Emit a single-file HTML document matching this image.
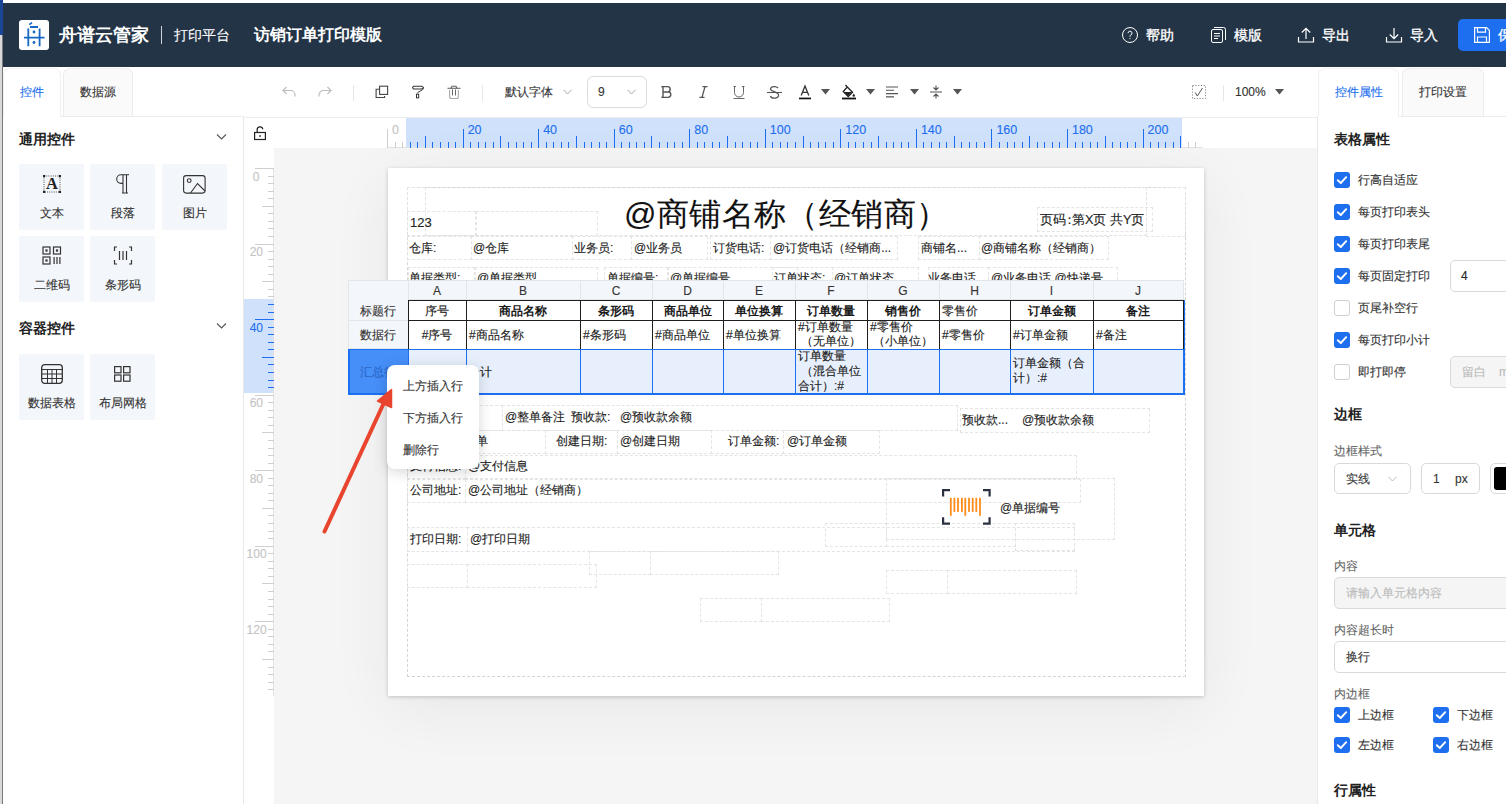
<!DOCTYPE html>
<html><head><meta charset="utf-8">
<style>
*{box-sizing:border-box;margin:0;padding:0}
html,body{width:1506px;height:804px;overflow:hidden;background:#fff;font-family:"Liberation Sans",sans-serif;color:#333;-webkit-text-stroke-width:0.12px}
.a{position:absolute}
.sec,[style*="font-weight:bold"]{-webkit-text-stroke-width:0 !important}
.t{position:absolute;white-space:nowrap;font-size:12px;line-height:14px}
.db{position:absolute;border:1px dashed #dcdcdc}
svg{position:absolute;overflow:visible}
/* header */
#hdr{position:absolute;left:3px;top:3px;width:1503px;height:64px;background:#233446}
.hi{position:absolute;color:#fff;font-size:14px;line-height:16px;white-space:nowrap;-webkit-text-stroke:0.35px #fff}
/* panels */
.tab{position:absolute;top:68px;height:49px;border:1px solid #ececec;border-bottom:none;border-radius:7px 7px 0 0;font-size:12px;line-height:47px;text-align:center;color:#333}
.card{position:absolute;width:65px;height:66px;background:#f3f6fa;border-radius:2px}
.card .lb{position:absolute;left:0;width:100%;top:42px;text-align:center;font-size:12px;line-height:14px;color:#333}
.sec{position:absolute;font-size:14px;font-weight:bold;line-height:16px;color:#222;white-space:nowrap}
/* ruler */
.rl{position:absolute;font-size:12px;color:#1e6ff0;line-height:12px}
/* table */
.th{position:absolute;font-size:12px;line-height:14px;text-align:center;color:#333}
.cb{position:absolute;width:16px;height:16px;border-radius:3px}
.cb.on{background:#1e6ff0}
.cb.off{border:1px solid #d0d0d0;background:#fff}
.rp{position:absolute;font-size:12px;line-height:14px;color:#333;white-space:nowrap}
.lbl{position:absolute;font-size:12px;line-height:14px;color:#666;white-space:nowrap}
.inp{position:absolute;border:1px solid #d9d9d9;border-radius:4px;background:#fff}
</style></head>
<body>
<!-- outer strips -->
<div class="a" style="left:0;top:0;width:1506px;height:3px;background:#fff"></div>
<div class="a" style="left:0;top:35px;width:2px;height:769px;background:#d9d9d9"></div>
<div class="a" style="left:2px;top:35px;width:1px;height:769px;background:#7a7a7a"></div>
<div class="a" style="left:0;top:0;width:3px;height:35px;background:#1b4596"></div>
<!-- HEADER -->
<div id="hdr"></div>
<div class="a" style="left:19px;top:20px;width:30px;height:30px;background:#fff;border-radius:3px"></div>
<svg style="left:19px;top:20px" width="30" height="30" viewBox="0 0 30 30">
 <g stroke="#1768c2" stroke-width="1.8" fill="none">
  <path d="M9.3 8.5 V26.2 M20.6 8.5 V26.2 M11 7 H19 M5 17.6 H25.5 M10.3 4.6 L13 2.6"/>
 </g>
 <circle cx="15" cy="12" r="1.4" fill="#1768c2"/><circle cx="15" cy="22.5" r="1.4" fill="#1768c2"/>
</svg>
<div class="hi" style="left:59px;top:25px;font-size:18px;line-height:20px;font-weight:bold;-webkit-text-stroke:0">舟谱云管家</div>
<div class="a" style="left:161px;top:26px;width:1px;height:18px;background:#d0d4da"></div>
<div class="hi" style="left:174px;top:27px;-webkit-text-stroke:0.1px #fff">打印平台</div>
<div class="hi" style="left:254px;top:26px;font-size:16px;line-height:18px;font-weight:bold;-webkit-text-stroke:0">访销订单打印模版</div>

<!-- header right -->
<svg style="left:1122px;top:27px" width="16" height="16" viewBox="0 0 16 16"><circle cx="8" cy="8" r="7.5" stroke="#fff" fill="none" stroke-width="1"/><path d="M6 6.2a2 2 0 1 1 2.6 1.9c-.4.2-.6.5-.6.9v.8" stroke="#fff" fill="none" stroke-width="1"/><circle cx="8" cy="11.6" r=".6" fill="#fff"/></svg>
<div class="hi" style="left:1146px;top:27px">帮助</div>
<svg style="left:1211px;top:27px" width="15" height="16" viewBox="0 0 15 16"><rect x="0.5" y="2.5" width="11" height="13" rx="1.5" stroke="#fff" fill="none"/><path d="M3 .5h9.5a2 2 0 0 1 2 2V13" stroke="#fff" fill="none"/><path d="M3 6.5h6M3 9h6M3 11.5h4" stroke="#fff"/></svg>
<div class="hi" style="left:1234px;top:27px">模版</div>
<svg style="left:1298px;top:27px" width="16" height="16" viewBox="0 0 16 16"><path d="M.5 10v5h15v-5M8 12V1.5M3.8 5.5 8 1.3l4.2 4.2" stroke="#fff" fill="none" stroke-width="1.2"/></svg>
<div class="hi" style="left:1322px;top:27px">导出</div>
<svg style="left:1386px;top:27px" width="16" height="16" viewBox="0 0 16 16"><path d="M.5 10v5h15v-5M8 1v10.5M3.8 7.5 8 11.7l4.2-4.2" stroke="#fff" fill="none" stroke-width="1.2"/></svg>
<div class="hi" style="left:1410px;top:27px">导入</div>
<div class="a" style="left:1458px;top:19px;width:60px;height:32px;background:#1e6ff0;border-radius:5px"></div>
<svg style="left:1474px;top:27px" width="16" height="16" viewBox="0 0 16 16"><path d="M.6.6h12l2.8 2.8v12H.6z M3.5.6v4.5h8V.6 M3.5 15.4V10h9v5.4" stroke="#fff" fill="none" stroke-width="1.2"/></svg>
<div class="hi" style="left:1498px;top:27px">保存</div>

<!-- LEFT PANEL -->
<div class="a" style="left:3px;top:67px;width:240px;height:737px;background:#fff"></div>
<div class="tab" style="left:3px;width:58px;color:#1e6ff0;background:#fff;border-color:#f1f1f1">控件</div>
<div class="tab" style="left:63px;width:70px;background:#fafafa">数据源</div>
<div class="a" style="left:60px;top:116px;width:184px;height:1px;background:#ececec"></div>
<div class="a" style="left:243px;top:117px;width:1px;height:687px;background:#ececec"></div>

<div class="sec" style="left:19px;top:131px">通用控件</div>
<svg style="left:216px;top:133px" width="11" height="8" viewBox="0 0 11 8"><path d="M1 1.5l4.5 4.5L10 1.5" stroke="#555" fill="none" stroke-width="1.1"/></svg>
<div class="card" style="left:19px;top:164px"><div class="lb">文本</div></div>
<div class="card" style="left:90px;top:164px"><div class="lb">段落</div></div>
<div class="card" style="left:162px;top:164px"><div class="lb">图片</div></div>
<div class="card" style="left:19px;top:236px"><div class="lb">二维码</div></div>
<div class="card" style="left:90px;top:236px"><div class="lb">条形码</div></div>
<div class="sec" style="left:19px;top:320px">容器控件</div>
<svg style="left:216px;top:322px" width="11" height="8" viewBox="0 0 11 8"><path d="M1 1.5l4.5 4.5L10 1.5" stroke="#555" fill="none" stroke-width="1.1"/></svg>
<div class="card" style="left:19px;top:354px"><div class="lb">数据表格</div></div>
<div class="card" style="left:90px;top:354px"><div class="lb">布局网格</div></div>
<!-- icons -->
<svg style="left:43px;top:175px" width="18" height="18" viewBox="0 0 18 18">
 <rect x="1" y="1" width="16" height="16" fill="none" stroke="#555" stroke-width="1" stroke-dasharray="1 1.2"/>
 <rect x="0" y="0" width="2.2" height="2.2" fill="#222"/><rect x="15.8" y="0" width="2.2" height="2.2" fill="#222"/>
 <rect x="0" y="15.8" width="2.2" height="2.2" fill="#222"/><rect x="15.8" y="15.8" width="2.2" height="2.2" fill="#222"/>
 <text x="9" y="14.2" text-anchor="middle" font-family="Liberation Serif" font-weight="bold" font-size="16.5" fill="#222" style="-webkit-text-stroke-width:0">A</text>
</svg>
<svg style="left:115px;top:174px" width="16" height="20" viewBox="0 0 16 20">
 <path d="M14 0.8 H6 A4.3 4.3 0 0 0 6 9.4 H8" stroke="#333" fill="none" stroke-width="1.1"/>
 <path d="M8 0.8 V19 M11.5 0.8 V19 M7 19 H13" stroke="#333" fill="none" stroke-width="1.1"/>
</svg>
<svg style="left:183px;top:175px" width="23" height="19" viewBox="0 0 23 19">
 <rect x="0.6" y="0.6" width="21.5" height="17.5" rx="2.5" stroke="#333" fill="none" stroke-width="1.1"/>
 <circle cx="6.2" cy="5.6" r="1.9" stroke="#333" fill="none" stroke-width="1.1"/>
 <path d="M7.5 18 L14.5 8.5 L22 16" stroke="#333" fill="none" stroke-width="1.1"/>
</svg>
<svg style="left:42px;top:246px" width="20" height="19" viewBox="0 0 20 19">
 <g stroke="#333" fill="none" stroke-width="1.2"><rect x="1" y="1" width="7" height="7"/><rect x="11.5" y="1" width="7" height="7"/><rect x="1" y="11" width="7" height="7"/></g>
 <g fill="#333"><rect x="3.4" y="3.4" width="2.2" height="2.2"/><rect x="13.9" y="3.4" width="2.2" height="2.2"/><rect x="3.4" y="13.4" width="2.2" height="2.2"/>
 <rect x="11.5" y="11" width="1.2" height="7"/><rect x="14.4" y="11" width="1.2" height="7"/><rect x="17.3" y="11" width="1.2" height="7"/></g>
</svg>
<svg style="left:113px;top:246px" width="20" height="19" viewBox="0 0 20 19">
 <path d="M4 1 H1.5 V5 M1.5 14 V18 H4 M16 1 H18.5 V5 M18.5 14 V18 H16" stroke="#333" fill="none" stroke-width="1.2"/>
 <path d="M6.5 5 V14 M10 5 V14 M13.5 5 V14" stroke="#333" stroke-width="1.2"/>
</svg>
<svg style="left:41px;top:364px" width="22" height="20" viewBox="0 0 22 20">
 <rect x="0.7" y="0.7" width="20.6" height="18.6" rx="3" stroke="#333" fill="none" stroke-width="1.3"/>
 <path d="M0.7 5.5 H21.3 M6.5 5.5 V19.3 M11 5.5 V19.3 M15.5 5.5 V19.3 M0.7 10 H21.3 M0.7 14.5 H21.3" stroke="#333" fill="none" stroke-width="1"/>
</svg>
<svg style="left:114px;top:366px" width="17" height="16" viewBox="0 0 17 16">
 <g stroke="#333" fill="none" stroke-width="1.2"><rect x="0.6" y="0.6" width="6.4" height="6.2"/><rect x="9.6" y="0.6" width="6.4" height="6.2"/><rect x="0.6" y="9" width="6.4" height="6.2"/><rect x="9.6" y="9" width="6.4" height="6.2"/></g>
</svg>


<!-- TOOLBAR -->
<svg style="left:282px;top:86px" width="14" height="11" viewBox="0 0 14 11"><path d="M4.5 1 L1 4.5 L4.5 8 M1 4.5 H8.5 A4.5 4.5 0 0 1 13 9 V10.5" stroke="#bdbdbd" fill="none" stroke-width="1.2"/></svg>
<svg style="left:318px;top:86px" width="14" height="11" viewBox="0 0 14 11"><path d="M9.5 1 L13 4.5 L9.5 8 M13 4.5 H5.5 A4.5 4.5 0 0 0 1 9 V10.5" stroke="#bdbdbd" fill="none" stroke-width="1.2"/></svg>
<div class="a" style="left:353px;top:85px;width:1px;height:16px;background:#e6e6e6"></div>
<svg style="left:375px;top:85px" width="14" height="14" viewBox="0 0 14 14"><rect x="4.6" y="1.2" width="8" height="8.2" stroke="#444" fill="none" stroke-width="1.1"/><path d="M4.2 4.3 H1.1 V12.5 H9.6 V11" stroke="#444" fill="none" stroke-width="1.1"/></svg>
<svg style="left:412px;top:85px" width="13" height="14" viewBox="0 0 13 14"><path d="M1.5 1.2 H9.8 L11.5 2.6 L9.8 4 H1.5 L0.6 2.6 Z" stroke="#333" fill="none" stroke-width="1.1" stroke-linejoin="round"/><path d="M11.5 2.6 Q11.8 5 8 6.2 Q5.6 6.8 5.6 8.3" stroke="#444" fill="none" stroke-width="1"/><rect x="4.5" y="9.2" width="2.2" height="3.6" stroke="#333" fill="none" stroke-width="1"/></svg>
<svg style="left:447px;top:85px" width="14" height="14" viewBox="0 0 14 14"><path d="M0.5 3.3 H13.5" stroke="#666" stroke-width="1.1"/><path d="M4 3.3 L5 1.2 H9 L10 3.3" stroke="#666" fill="none" stroke-width="1.1"/><path d="M2.6 5 V11.5 A2 2 0 0 0 4.6 13.5 H9.4 A2 2 0 0 0 11.4 11.5 V5" stroke="#aaa" fill="none" stroke-width="1.1"/><path d="M5.5 4.5 V10.5 M8.5 4.5 V10.5" stroke="#666" stroke-width="1"/></svg>
<div class="a" style="left:482px;top:85px;width:1px;height:16px;background:#e6e6e6"></div>
<div class="t" style="left:505px;top:85px;color:#333">默认字体</div>
<svg style="left:563px;top:89px" width="9" height="6" viewBox="0 0 9 6"><path d="M.5 .8 4.5 5 8.5 .8" stroke="#aaa" fill="none" stroke-width="1"/></svg>
<div class="inp" style="left:587px;top:76px;width:60px;height:32px;border-radius:6px;border-color:#dcdcdc"></div>
<div class="t" style="left:598px;top:85px;color:#333">9</div>
<svg style="left:627px;top:89px" width="9" height="6" viewBox="0 0 9 6"><path d="M.5 .8 4.5 5 8.5 .8" stroke="#aaa" fill="none" stroke-width="1"/></svg>
<!-- B I U S -->
<svg style="left:661px;top:86px" width="12" height="12" viewBox="0 0 12 12"><path d="M0.3 0.6 H6.5 A2.7 2.7 0 0 1 6.5 6 H2 M2 0.6 V11.4 M0.3 11.4 H7 A2.8 2.8 0 0 0 7 5.8" stroke="#555" fill="none" stroke-width="1.4"/></svg>
<svg style="left:699px;top:86px" width="9" height="12" viewBox="0 0 9 12"><path d="M3.5 0.6 H8.5 M0.5 11.4 H5.5 M6 0.6 L3 11.4" stroke="#555" fill="none" stroke-width="1.3"/></svg>
<svg style="left:733px;top:86px" width="12" height="14" viewBox="0 0 12 14"><path d="M1.5 0 V6.5 A4.5 4.5 0 0 0 10.5 6.5 V0 M0.5 0.5 H3 M9 0.5 H11.5 M0.5 12.5 H11.5" stroke="#666" fill="none" stroke-width="1"/></svg>
<svg style="left:767px;top:86px" width="15" height="13" viewBox="0 0 15 13"><path d="M11 2 A4 2.6 0 0 0 3.5 3 C3.5 5.5 11.5 6 11.5 9 A4 2.6 0 0 1 3.5 10" stroke="#555" fill="none" stroke-width="1.3"/><path d="M0 6.5 H15" stroke="#555" stroke-width="1.1"/></svg>
<svg style="left:799px;top:85px" width="13" height="15" viewBox="0 0 13 15"><path d="M2.2 10.5 L6 1 L9.8 10.5 M3.5 7.3 H8.5" stroke="#333" fill="none" stroke-width="1.3"/><rect x="0" y="12.6" width="12" height="1.7" fill="#111"/></svg>
<svg style="left:821px;top:89px" width="9" height="6" viewBox="0 0 9 6"><path d="M0 0 H9 L4.5 5.5Z" fill="#555"/></svg>
<svg style="left:842px;top:84px" width="14" height="16" viewBox="0 0 14 16"><path d="M3.5 1 L5.3 3 M5.3 3 L10.5 8.2 L6.2 12.5 L1.2 7.5 Z" stroke="#222" fill="none" stroke-width="1.3"/><path d="M1.8 8 L10 8 L6.2 12 Z" fill="#222"/><path d="M11.8 9.5 L13 11.5 A1.2 1.2 0 0 1 10.6 11.5 Z" fill="#222"/><rect x="0" y="13.6" width="14" height="1.8" fill="#111"/></svg>
<svg style="left:866px;top:89px" width="9" height="6" viewBox="0 0 9 6"><path d="M0 0 H9 L4.5 5.5Z" fill="#555"/></svg>
<svg style="left:886px;top:86px" width="13" height="12" viewBox="0 0 13 12"><path d="M0 1 H12 M0 4.3 H8 M0 7.6 H12 M0 10.9 H8" stroke="#555" stroke-width="1.1"/></svg>
<svg style="left:910px;top:89px" width="9" height="6" viewBox="0 0 9 6"><path d="M0 0 H9 L4.5 5.5Z" fill="#555"/></svg>
<svg style="left:930px;top:85px" width="12" height="14" viewBox="0 0 12 14"><path d="M0 7 H12 M6 0.5 V5 M6 9 V13.5 M3.5 2.5 L6 5 L8.5 2.5 M3.5 11.5 L6 9 L8.5 11.5" stroke="#555" fill="none" stroke-width="1.1"/></svg>
<svg style="left:953px;top:89px" width="9" height="6" viewBox="0 0 9 6"><path d="M0 0 H9 L4.5 5.5Z" fill="#555"/></svg>
<svg style="left:1192px;top:85px" width="14" height="14" viewBox="0 0 14 14"><rect x="0.5" y="0.5" width="13" height="13" stroke="#888" fill="none" stroke-width="1" stroke-dasharray="1.2 1.6"/><path d="M3.2 7.5 L5.3 11 L10.5 3" stroke="#555" fill="none" stroke-width="1"/></svg>
<div class="a" style="left:1223px;top:85px;width:1px;height:16px;background:#e6e6e6"></div>
<div class="t" style="left:1235px;top:85px;color:#333">100%</div>
<svg style="left:1275px;top:89px" width="9" height="6" viewBox="0 0 9 6"><path d="M0 0 H9 L4.5 5.5Z" fill="#555"/></svg>
<div class="a" style="left:244px;top:117px;width:1074px;height:1px;background:#ececec"></div>


<!-- RULERS / CANVAS -->
<!--CANVAS--><div class="a" style="left:244px;top:118px;width:1074px;height:30px;background:#fff"></div>
<div class="a" style="left:244px;top:148px;width:30px;height:656px;background:#fff"></div>
<div class="a" style="left:274px;top:148px;width:1044px;height:656px;background:#f5f5f5"></div>
<div class="a" style="left:243px;top:117px;width:1px;height:687px;background:#e8e8e8"></div>
<div class="a" style="left:1317px;top:117px;width:1px;height:687px;background:#e8e8e8"></div>
<svg style="left:254px;top:126px" width="12" height="14" viewBox="0 0 12 14"><path d="M3.2 6.5 V4 A2.8 2.8 0 0 1 8.8 3.3" stroke="#222" fill="none" stroke-width="1.2"/><rect x="0.6" y="6.5" width="10.8" height="7" stroke="#222" fill="none" stroke-width="1.2"/><rect x="5.4" y="9" width="1.2" height="2" fill="#222"/></svg>
<div class="a" style="left:406px;top:118px;width:776px;height:30px;background:#d0e2fb"></div>
<div class="a" style="left:388px;top:147px;width:815px;height:1px;background:#e3e3e3"></div>
<div class="a" style="left:387.10px;top:129px;width:1px;height:19px;background:#cfcfcf"></div>
<div class="rl" style="left:392.10px;top:124px;font-size:12.5px;color:#c4c4c4">0</div>
<div class="a" style="left:394.65px;top:142px;width:1px;height:6px;background:#cfcfcf"></div>
<div class="a" style="left:402.21px;top:142px;width:1px;height:6px;background:#cfcfcf"></div>
<div class="a" style="left:409.76px;top:142px;width:1px;height:6px;background:#1e6ff0"></div>
<div class="a" style="left:417.32px;top:142px;width:1px;height:6px;background:#1e6ff0"></div>
<div class="a" style="left:424.87px;top:136px;width:1px;height:12px;background:#1e6ff0"></div>
<div class="a" style="left:432.42px;top:142px;width:1px;height:6px;background:#1e6ff0"></div>
<div class="a" style="left:439.98px;top:142px;width:1px;height:6px;background:#1e6ff0"></div>
<div class="a" style="left:447.53px;top:142px;width:1px;height:6px;background:#1e6ff0"></div>
<div class="a" style="left:455.09px;top:142px;width:1px;height:6px;background:#1e6ff0"></div>
<div class="a" style="left:462.64px;top:129px;width:1px;height:19px;background:#1e6ff0"></div>
<div class="rl" style="left:467.64px;top:124px;font-size:12.5px;color:#1e6ff0">20</div>
<div class="a" style="left:470.19px;top:142px;width:1px;height:6px;background:#1e6ff0"></div>
<div class="a" style="left:477.75px;top:142px;width:1px;height:6px;background:#1e6ff0"></div>
<div class="a" style="left:485.30px;top:142px;width:1px;height:6px;background:#1e6ff0"></div>
<div class="a" style="left:492.86px;top:142px;width:1px;height:6px;background:#1e6ff0"></div>
<div class="a" style="left:500.41px;top:136px;width:1px;height:12px;background:#1e6ff0"></div>
<div class="a" style="left:507.96px;top:142px;width:1px;height:6px;background:#1e6ff0"></div>
<div class="a" style="left:515.52px;top:142px;width:1px;height:6px;background:#1e6ff0"></div>
<div class="a" style="left:523.07px;top:142px;width:1px;height:6px;background:#1e6ff0"></div>
<div class="a" style="left:530.63px;top:142px;width:1px;height:6px;background:#1e6ff0"></div>
<div class="a" style="left:538.18px;top:129px;width:1px;height:19px;background:#1e6ff0"></div>
<div class="rl" style="left:543.18px;top:124px;font-size:12.5px;color:#1e6ff0">40</div>
<div class="a" style="left:545.73px;top:142px;width:1px;height:6px;background:#1e6ff0"></div>
<div class="a" style="left:553.29px;top:142px;width:1px;height:6px;background:#1e6ff0"></div>
<div class="a" style="left:560.84px;top:142px;width:1px;height:6px;background:#1e6ff0"></div>
<div class="a" style="left:568.40px;top:142px;width:1px;height:6px;background:#1e6ff0"></div>
<div class="a" style="left:575.95px;top:136px;width:1px;height:12px;background:#1e6ff0"></div>
<div class="a" style="left:583.50px;top:142px;width:1px;height:6px;background:#1e6ff0"></div>
<div class="a" style="left:591.06px;top:142px;width:1px;height:6px;background:#1e6ff0"></div>
<div class="a" style="left:598.61px;top:142px;width:1px;height:6px;background:#1e6ff0"></div>
<div class="a" style="left:606.17px;top:142px;width:1px;height:6px;background:#1e6ff0"></div>
<div class="a" style="left:613.72px;top:129px;width:1px;height:19px;background:#1e6ff0"></div>
<div class="rl" style="left:618.72px;top:124px;font-size:12.5px;color:#1e6ff0">60</div>
<div class="a" style="left:621.27px;top:142px;width:1px;height:6px;background:#1e6ff0"></div>
<div class="a" style="left:628.83px;top:142px;width:1px;height:6px;background:#1e6ff0"></div>
<div class="a" style="left:636.38px;top:142px;width:1px;height:6px;background:#1e6ff0"></div>
<div class="a" style="left:643.94px;top:142px;width:1px;height:6px;background:#1e6ff0"></div>
<div class="a" style="left:651.49px;top:136px;width:1px;height:12px;background:#1e6ff0"></div>
<div class="a" style="left:659.04px;top:142px;width:1px;height:6px;background:#1e6ff0"></div>
<div class="a" style="left:666.60px;top:142px;width:1px;height:6px;background:#1e6ff0"></div>
<div class="a" style="left:674.15px;top:142px;width:1px;height:6px;background:#1e6ff0"></div>
<div class="a" style="left:681.71px;top:142px;width:1px;height:6px;background:#1e6ff0"></div>
<div class="a" style="left:689.26px;top:129px;width:1px;height:19px;background:#1e6ff0"></div>
<div class="rl" style="left:694.26px;top:124px;font-size:12.5px;color:#1e6ff0">80</div>
<div class="a" style="left:696.81px;top:142px;width:1px;height:6px;background:#1e6ff0"></div>
<div class="a" style="left:704.37px;top:142px;width:1px;height:6px;background:#1e6ff0"></div>
<div class="a" style="left:711.92px;top:142px;width:1px;height:6px;background:#1e6ff0"></div>
<div class="a" style="left:719.48px;top:142px;width:1px;height:6px;background:#1e6ff0"></div>
<div class="a" style="left:727.03px;top:136px;width:1px;height:12px;background:#1e6ff0"></div>
<div class="a" style="left:734.58px;top:142px;width:1px;height:6px;background:#1e6ff0"></div>
<div class="a" style="left:742.14px;top:142px;width:1px;height:6px;background:#1e6ff0"></div>
<div class="a" style="left:749.69px;top:142px;width:1px;height:6px;background:#1e6ff0"></div>
<div class="a" style="left:757.25px;top:142px;width:1px;height:6px;background:#1e6ff0"></div>
<div class="a" style="left:764.80px;top:129px;width:1px;height:19px;background:#1e6ff0"></div>
<div class="rl" style="left:769.80px;top:124px;font-size:12.5px;color:#1e6ff0">100</div>
<div class="a" style="left:772.35px;top:142px;width:1px;height:6px;background:#1e6ff0"></div>
<div class="a" style="left:779.91px;top:142px;width:1px;height:6px;background:#1e6ff0"></div>
<div class="a" style="left:787.46px;top:142px;width:1px;height:6px;background:#1e6ff0"></div>
<div class="a" style="left:795.02px;top:142px;width:1px;height:6px;background:#1e6ff0"></div>
<div class="a" style="left:802.57px;top:136px;width:1px;height:12px;background:#1e6ff0"></div>
<div class="a" style="left:810.12px;top:142px;width:1px;height:6px;background:#1e6ff0"></div>
<div class="a" style="left:817.68px;top:142px;width:1px;height:6px;background:#1e6ff0"></div>
<div class="a" style="left:825.23px;top:142px;width:1px;height:6px;background:#1e6ff0"></div>
<div class="a" style="left:832.79px;top:142px;width:1px;height:6px;background:#1e6ff0"></div>
<div class="a" style="left:840.34px;top:129px;width:1px;height:19px;background:#1e6ff0"></div>
<div class="rl" style="left:845.34px;top:124px;font-size:12.5px;color:#1e6ff0">120</div>
<div class="a" style="left:847.89px;top:142px;width:1px;height:6px;background:#1e6ff0"></div>
<div class="a" style="left:855.45px;top:142px;width:1px;height:6px;background:#1e6ff0"></div>
<div class="a" style="left:863.00px;top:142px;width:1px;height:6px;background:#1e6ff0"></div>
<div class="a" style="left:870.56px;top:142px;width:1px;height:6px;background:#1e6ff0"></div>
<div class="a" style="left:878.11px;top:136px;width:1px;height:12px;background:#1e6ff0"></div>
<div class="a" style="left:885.66px;top:142px;width:1px;height:6px;background:#1e6ff0"></div>
<div class="a" style="left:893.22px;top:142px;width:1px;height:6px;background:#1e6ff0"></div>
<div class="a" style="left:900.77px;top:142px;width:1px;height:6px;background:#1e6ff0"></div>
<div class="a" style="left:908.33px;top:142px;width:1px;height:6px;background:#1e6ff0"></div>
<div class="a" style="left:915.88px;top:129px;width:1px;height:19px;background:#1e6ff0"></div>
<div class="rl" style="left:920.88px;top:124px;font-size:12.5px;color:#1e6ff0">140</div>
<div class="a" style="left:923.43px;top:142px;width:1px;height:6px;background:#1e6ff0"></div>
<div class="a" style="left:930.99px;top:142px;width:1px;height:6px;background:#1e6ff0"></div>
<div class="a" style="left:938.54px;top:142px;width:1px;height:6px;background:#1e6ff0"></div>
<div class="a" style="left:946.10px;top:142px;width:1px;height:6px;background:#1e6ff0"></div>
<div class="a" style="left:953.65px;top:136px;width:1px;height:12px;background:#1e6ff0"></div>
<div class="a" style="left:961.20px;top:142px;width:1px;height:6px;background:#1e6ff0"></div>
<div class="a" style="left:968.76px;top:142px;width:1px;height:6px;background:#1e6ff0"></div>
<div class="a" style="left:976.31px;top:142px;width:1px;height:6px;background:#1e6ff0"></div>
<div class="a" style="left:983.87px;top:142px;width:1px;height:6px;background:#1e6ff0"></div>
<div class="a" style="left:991.42px;top:129px;width:1px;height:19px;background:#1e6ff0"></div>
<div class="rl" style="left:996.42px;top:124px;font-size:12.5px;color:#1e6ff0">160</div>
<div class="a" style="left:998.97px;top:142px;width:1px;height:6px;background:#1e6ff0"></div>
<div class="a" style="left:1006.53px;top:142px;width:1px;height:6px;background:#1e6ff0"></div>
<div class="a" style="left:1014.08px;top:142px;width:1px;height:6px;background:#1e6ff0"></div>
<div class="a" style="left:1021.64px;top:142px;width:1px;height:6px;background:#1e6ff0"></div>
<div class="a" style="left:1029.19px;top:136px;width:1px;height:12px;background:#1e6ff0"></div>
<div class="a" style="left:1036.74px;top:142px;width:1px;height:6px;background:#1e6ff0"></div>
<div class="a" style="left:1044.30px;top:142px;width:1px;height:6px;background:#1e6ff0"></div>
<div class="a" style="left:1051.85px;top:142px;width:1px;height:6px;background:#1e6ff0"></div>
<div class="a" style="left:1059.41px;top:142px;width:1px;height:6px;background:#1e6ff0"></div>
<div class="a" style="left:1066.96px;top:129px;width:1px;height:19px;background:#1e6ff0"></div>
<div class="rl" style="left:1071.96px;top:124px;font-size:12.5px;color:#1e6ff0">180</div>
<div class="a" style="left:1074.51px;top:142px;width:1px;height:6px;background:#1e6ff0"></div>
<div class="a" style="left:1082.07px;top:142px;width:1px;height:6px;background:#1e6ff0"></div>
<div class="a" style="left:1089.62px;top:142px;width:1px;height:6px;background:#1e6ff0"></div>
<div class="a" style="left:1097.18px;top:142px;width:1px;height:6px;background:#1e6ff0"></div>
<div class="a" style="left:1104.73px;top:136px;width:1px;height:12px;background:#1e6ff0"></div>
<div class="a" style="left:1112.28px;top:142px;width:1px;height:6px;background:#1e6ff0"></div>
<div class="a" style="left:1119.84px;top:142px;width:1px;height:6px;background:#1e6ff0"></div>
<div class="a" style="left:1127.39px;top:142px;width:1px;height:6px;background:#1e6ff0"></div>
<div class="a" style="left:1134.95px;top:142px;width:1px;height:6px;background:#1e6ff0"></div>
<div class="a" style="left:1142.50px;top:129px;width:1px;height:19px;background:#1e6ff0"></div>
<div class="rl" style="left:1147.50px;top:124px;font-size:12.5px;color:#1e6ff0">200</div>
<div class="a" style="left:1150.05px;top:142px;width:1px;height:6px;background:#1e6ff0"></div>
<div class="a" style="left:1157.61px;top:142px;width:1px;height:6px;background:#1e6ff0"></div>
<div class="a" style="left:1165.16px;top:142px;width:1px;height:6px;background:#1e6ff0"></div>
<div class="a" style="left:1172.72px;top:142px;width:1px;height:6px;background:#1e6ff0"></div>
<div class="a" style="left:1180.27px;top:136px;width:1px;height:12px;background:#1e6ff0"></div>
<div class="a" style="left:1187.82px;top:142px;width:1px;height:6px;background:#cfcfcf"></div>
<div class="a" style="left:1195.38px;top:142px;width:1px;height:6px;background:#cfcfcf"></div>
<div class="a" style="left:244px;top:299px;width:30px;height:94px;background:#d0e2fb"></div>
<div class="a" style="left:273px;top:168px;width:1px;height:528px;background:#e3e3e3"></div>
<div class="a" style="left:255px;top:168.00px;width:19px;height:1px;background:#cfcfcf"></div>
<div class="rl" style="left:252.8px;top:170.5px;color:#c4c4c4">0</div>
<div class="a" style="left:268px;top:175.55px;width:6px;height:1px;background:#cfcfcf"></div>
<div class="a" style="left:268px;top:183.11px;width:6px;height:1px;background:#cfcfcf"></div>
<div class="a" style="left:268px;top:190.66px;width:6px;height:1px;background:#cfcfcf"></div>
<div class="a" style="left:268px;top:198.22px;width:6px;height:1px;background:#cfcfcf"></div>
<div class="a" style="left:262px;top:205.77px;width:12px;height:1px;background:#cfcfcf"></div>
<div class="a" style="left:268px;top:213.32px;width:6px;height:1px;background:#cfcfcf"></div>
<div class="a" style="left:268px;top:220.88px;width:6px;height:1px;background:#cfcfcf"></div>
<div class="a" style="left:268px;top:228.43px;width:6px;height:1px;background:#cfcfcf"></div>
<div class="a" style="left:268px;top:235.99px;width:6px;height:1px;background:#cfcfcf"></div>
<div class="a" style="left:255px;top:243.54px;width:19px;height:1px;background:#cfcfcf"></div>
<div class="rl" style="left:249.7px;top:246.0px;color:#c4c4c4">20</div>
<div class="a" style="left:268px;top:251.09px;width:6px;height:1px;background:#cfcfcf"></div>
<div class="a" style="left:268px;top:258.65px;width:6px;height:1px;background:#cfcfcf"></div>
<div class="a" style="left:268px;top:266.20px;width:6px;height:1px;background:#cfcfcf"></div>
<div class="a" style="left:268px;top:273.76px;width:6px;height:1px;background:#cfcfcf"></div>
<div class="a" style="left:262px;top:281.31px;width:12px;height:1px;background:#cfcfcf"></div>
<div class="a" style="left:268px;top:288.86px;width:6px;height:1px;background:#cfcfcf"></div>
<div class="a" style="left:268px;top:296.42px;width:6px;height:1px;background:#cfcfcf"></div>
<div class="a" style="left:268px;top:303.97px;width:6px;height:1px;background:#1e6ff0"></div>
<div class="a" style="left:268px;top:311.53px;width:6px;height:1px;background:#1e6ff0"></div>
<div class="a" style="left:255px;top:319.08px;width:19px;height:1px;background:#1e6ff0"></div>
<div class="rl" style="left:249.7px;top:321.6px;color:#1e6ff0">40</div>
<div class="a" style="left:268px;top:326.63px;width:6px;height:1px;background:#1e6ff0"></div>
<div class="a" style="left:268px;top:334.19px;width:6px;height:1px;background:#1e6ff0"></div>
<div class="a" style="left:268px;top:341.74px;width:6px;height:1px;background:#1e6ff0"></div>
<div class="a" style="left:268px;top:349.30px;width:6px;height:1px;background:#1e6ff0"></div>
<div class="a" style="left:262px;top:356.85px;width:12px;height:1px;background:#1e6ff0"></div>
<div class="a" style="left:268px;top:364.40px;width:6px;height:1px;background:#1e6ff0"></div>
<div class="a" style="left:268px;top:371.96px;width:6px;height:1px;background:#1e6ff0"></div>
<div class="a" style="left:268px;top:379.51px;width:6px;height:1px;background:#1e6ff0"></div>
<div class="a" style="left:268px;top:387.07px;width:6px;height:1px;background:#1e6ff0"></div>
<div class="a" style="left:255px;top:394.62px;width:19px;height:1px;background:#cfcfcf"></div>
<div class="rl" style="left:249.7px;top:397.1px;color:#c4c4c4">60</div>
<div class="a" style="left:268px;top:402.17px;width:6px;height:1px;background:#cfcfcf"></div>
<div class="a" style="left:268px;top:409.73px;width:6px;height:1px;background:#cfcfcf"></div>
<div class="a" style="left:268px;top:417.28px;width:6px;height:1px;background:#cfcfcf"></div>
<div class="a" style="left:268px;top:424.84px;width:6px;height:1px;background:#cfcfcf"></div>
<div class="a" style="left:262px;top:432.39px;width:12px;height:1px;background:#cfcfcf"></div>
<div class="a" style="left:268px;top:439.94px;width:6px;height:1px;background:#cfcfcf"></div>
<div class="a" style="left:268px;top:447.50px;width:6px;height:1px;background:#cfcfcf"></div>
<div class="a" style="left:268px;top:455.05px;width:6px;height:1px;background:#cfcfcf"></div>
<div class="a" style="left:268px;top:462.61px;width:6px;height:1px;background:#cfcfcf"></div>
<div class="a" style="left:255px;top:470.16px;width:19px;height:1px;background:#cfcfcf"></div>
<div class="rl" style="left:249.7px;top:472.7px;color:#c4c4c4">80</div>
<div class="a" style="left:268px;top:477.71px;width:6px;height:1px;background:#cfcfcf"></div>
<div class="a" style="left:268px;top:485.27px;width:6px;height:1px;background:#cfcfcf"></div>
<div class="a" style="left:268px;top:492.82px;width:6px;height:1px;background:#cfcfcf"></div>
<div class="a" style="left:268px;top:500.38px;width:6px;height:1px;background:#cfcfcf"></div>
<div class="a" style="left:262px;top:507.93px;width:12px;height:1px;background:#cfcfcf"></div>
<div class="a" style="left:268px;top:515.48px;width:6px;height:1px;background:#cfcfcf"></div>
<div class="a" style="left:268px;top:523.04px;width:6px;height:1px;background:#cfcfcf"></div>
<div class="a" style="left:268px;top:530.59px;width:6px;height:1px;background:#cfcfcf"></div>
<div class="a" style="left:268px;top:538.15px;width:6px;height:1px;background:#cfcfcf"></div>
<div class="a" style="left:255px;top:545.70px;width:19px;height:1px;background:#cfcfcf"></div>
<div class="rl" style="left:246.6px;top:548.2px;color:#c4c4c4">100</div>
<div class="a" style="left:268px;top:553.25px;width:6px;height:1px;background:#cfcfcf"></div>
<div class="a" style="left:268px;top:560.81px;width:6px;height:1px;background:#cfcfcf"></div>
<div class="a" style="left:268px;top:568.36px;width:6px;height:1px;background:#cfcfcf"></div>
<div class="a" style="left:268px;top:575.92px;width:6px;height:1px;background:#cfcfcf"></div>
<div class="a" style="left:262px;top:583.47px;width:12px;height:1px;background:#cfcfcf"></div>
<div class="a" style="left:268px;top:591.02px;width:6px;height:1px;background:#cfcfcf"></div>
<div class="a" style="left:268px;top:598.58px;width:6px;height:1px;background:#cfcfcf"></div>
<div class="a" style="left:268px;top:606.13px;width:6px;height:1px;background:#cfcfcf"></div>
<div class="a" style="left:268px;top:613.69px;width:6px;height:1px;background:#cfcfcf"></div>
<div class="a" style="left:255px;top:621.24px;width:19px;height:1px;background:#cfcfcf"></div>
<div class="rl" style="left:246.6px;top:623.7px;color:#c4c4c4">120</div>
<div class="a" style="left:268px;top:628.79px;width:6px;height:1px;background:#cfcfcf"></div>
<div class="a" style="left:268px;top:636.35px;width:6px;height:1px;background:#cfcfcf"></div>
<div class="a" style="left:268px;top:643.90px;width:6px;height:1px;background:#cfcfcf"></div>
<div class="a" style="left:268px;top:651.46px;width:6px;height:1px;background:#cfcfcf"></div>
<div class="a" style="left:262px;top:659.01px;width:12px;height:1px;background:#cfcfcf"></div>
<div class="a" style="left:268px;top:666.56px;width:6px;height:1px;background:#cfcfcf"></div>
<div class="a" style="left:268px;top:674.12px;width:6px;height:1px;background:#cfcfcf"></div>
<div class="a" style="left:268px;top:681.67px;width:6px;height:1px;background:#cfcfcf"></div>
<div class="a" style="left:268px;top:689.23px;width:6px;height:1px;background:#cfcfcf"></div>
<div class="a" style="left:388px;top:168px;width:816px;height:528px;background:#fff;box-shadow:0 1px 4px rgba(0,0,0,.2),0 12px 60px rgba(0,0,0,.06)"></div><!--/CANVAS-->

<!--PAPER--><div class="db" style="left:407px;top:187px;width:779px;height:490px;border-color:#d4d4d4"></div>
<div class="db" style="left:407px;top:187px;width:19px;height:49px;border-color:#e4e4e4"></div>
<div class="db" style="left:425px;top:187px;width:722px;height:49px;border-color:#e4e4e4"></div>
<div class="db" style="left:1146px;top:187px;width:40px;height:50px;border-color:#e4e4e4"></div>
<div class="db" style="left:407px;top:211px;width:69px;height:25px;border-color:#e4e4e4"></div>
<div class="db" style="left:476px;top:211px;width:122px;height:25px;border-color:#e4e4e4"></div>
<div class="db" style="left:1037px;top:207px;width:116px;height:25px;border-color:#e4e4e4"></div>
<div class="db" style="left:407px;top:236px;width:65px;height:24px;border-color:#e4e4e4"></div>
<div class="db" style="left:471px;top:236px;width:102px;height:24px;border-color:#e4e4e4"></div>
<div class="db" style="left:572px;top:236px;width:60px;height:24px;border-color:#e4e4e4"></div>
<div class="db" style="left:631px;top:236px;width:77px;height:24px;border-color:#e4e4e4"></div>
<div class="db" style="left:710px;top:236px;width:61px;height:24px;border-color:#e4e4e4"></div>
<div class="db" style="left:770px;top:236px;width:128px;height:24px;border-color:#e4e4e4"></div>
<div class="db" style="left:918px;top:236px;width:62px;height:24px;border-color:#e4e4e4"></div>
<div class="db" style="left:979px;top:236px;width:130px;height:24px;border-color:#e4e4e4"></div>
<div class="db" style="left:408px;top:267px;width:67px;height:34px;border-color:#e4e4e4"></div>
<div class="db" style="left:475px;top:267px;width:123px;height:34px;border-color:#e4e4e4"></div>
<div class="db" style="left:604px;top:267px;width:64px;height:34px;border-color:#e4e4e4"></div>
<div class="db" style="left:668px;top:267px;width:130px;height:34px;border-color:#e4e4e4"></div>
<div class="db" style="left:772px;top:267px;width:61px;height:34px;border-color:#e4e4e4"></div>
<div class="db" style="left:832px;top:267px;width:87px;height:34px;border-color:#e4e4e4"></div>
<div class="db" style="left:928px;top:267px;width:61px;height:34px;border-color:#e4e4e4"></div>
<div class="db" style="left:988px;top:267px;width:130px;height:34px;border-color:#e4e4e4"></div>
<div class="t" style="left:410px;top:216px;color:#222;font-size:13px">123</div>
<div class="t" style="left:624px;top:195px;font-size:32px;letter-spacing:0.4px;line-height:38px;color:#111">@商铺名称（经销商）</div>
<div class="t" style="left:1040px;top:213px;color:#222;font-size:12.7px">页码<span style="margin-left:-3px;margin-right:-4px">：</span>第X页 共Y页</div>
<div class="t" style="left:409px;top:241px;color:#222;">仓库:</div>
<div class="t" style="left:473px;top:241px;color:#222;">@仓库</div>
<div class="t" style="left:574px;top:241px;color:#222;">业务员:</div>
<div class="t" style="left:634px;top:241px;color:#222;">@业务员</div>
<div class="t" style="left:713px;top:241px;color:#222;">订货电话:</div>
<div class="t" style="left:773px;top:241px;color:#222;">@订货电话（经销商...</div>
<div class="t" style="left:921px;top:241px;color:#222;">商铺名...</div>
<div class="t" style="left:981px;top:241px;color:#222;">@商铺名称（经销商）</div>
<div class="t" style="left:409px;top:271px;color:#222;">单据类型:</div>
<div class="t" style="left:477px;top:271px;color:#222;">@单据类型</div>
<div class="t" style="left:607px;top:271px;color:#222;">单据编号:</div>
<div class="t" style="left:670px;top:271px;color:#222;">@单据编号</div>
<div class="t" style="left:774px;top:271px;color:#222;">订单状态:</div>
<div class="t" style="left:834px;top:271px;color:#222;">@订单状态</div>
<div class="t" style="left:928px;top:271px;color:#222;">业务电话...</div>
<div class="t" style="left:991px;top:271px;color:#222;">@业务电话 @快递号...</div>
<div class="db" style="left:407px;top:405px;width:96px;height:26px;border-color:#e4e4e4"></div>
<div class="db" style="left:502px;top:405px;width:456px;height:26px;border-color:#e4e4e4"></div>
<div class="db" style="left:960px;top:408px;width:190px;height:25px;border-color:#e4e4e4"></div>
<div class="db" style="left:407px;top:430px;width:139px;height:24px;border-color:#e4e4e4"></div>
<div class="db" style="left:545px;top:430px;width:73px;height:24px;border-color:#e4e4e4"></div>
<div class="db" style="left:617px;top:430px;width:95px;height:24px;border-color:#e4e4e4"></div>
<div class="db" style="left:711px;top:430px;width:73px;height:24px;border-color:#e4e4e4"></div>
<div class="db" style="left:783px;top:430px;width:97px;height:24px;border-color:#e4e4e4"></div>
<div class="db" style="left:407px;top:455px;width:59px;height:24px;border-color:#e4e4e4"></div>
<div class="db" style="left:465px;top:455px;width:612px;height:24px;border-color:#e4e4e4"></div>
<div class="db" style="left:407px;top:479px;width:59px;height:24px;border-color:#e4e4e4"></div>
<div class="db" style="left:465px;top:479px;width:616px;height:24px;border-color:#e4e4e4"></div>
<div class="db" style="left:886px;top:478px;width:229px;height:62px;border-color:#e4e4e4"></div>
<div class="db" style="left:407px;top:527px;width:61px;height:25px;border-color:#e4e4e4"></div>
<div class="db" style="left:467px;top:527px;width:608px;height:25px;border-color:#e4e4e4"></div>
<div class="db" style="left:825px;top:523px;width:62px;height:24px;border-color:#e4e4e4"></div>
<div class="db" style="left:886px;top:523px;width:130px;height:24px;border-color:#e4e4e4"></div>
<div class="db" style="left:1015px;top:523px;width:60px;height:28px;border-color:#e4e4e4"></div>
<div class="db" style="left:589px;top:551px;width:62px;height:24px;border-color:#e4e4e4"></div>
<div class="db" style="left:650px;top:551px;width:129px;height:24px;border-color:#e4e4e4"></div>
<div class="db" style="left:407px;top:564px;width:61px;height:24px;border-color:#e4e4e4"></div>
<div class="db" style="left:467px;top:564px;width:130px;height:24px;border-color:#e4e4e4"></div>
<div class="db" style="left:886px;top:570px;width:62px;height:24px;border-color:#e4e4e4"></div>
<div class="db" style="left:947px;top:570px;width:130px;height:24px;border-color:#e4e4e4"></div>
<div class="db" style="left:700px;top:598px;width:62px;height:24px;border-color:#e4e4e4"></div>
<div class="db" style="left:761px;top:598px;width:129px;height:24px;border-color:#e4e4e4"></div>
<div class="t" style="left:505px;top:410px;color:#222;">@整单备注</div>
<div class="t" style="left:571px;top:410px;color:#222;">预收款:</div>
<div class="t" style="left:620px;top:410px;color:#222;">@预收款余额</div>
<div class="t" style="left:962px;top:413px;color:#222;">预收款...</div>
<div class="t" style="left:1022px;top:413px;color:#222;">@预收款余额</div>
<div class="t" style="left:464px;top:434px;color:#222;">订单</div>
<div class="t" style="left:556px;top:434px;color:#222;">创建日期:</div>
<div class="t" style="left:620px;top:434px;color:#222;">@创建日期</div>
<div class="t" style="left:728px;top:434px;color:#222;">订单金额:</div>
<div class="t" style="left:787px;top:434px;color:#222;">@订单金额</div>
<div class="t" style="left:410px;top:459px;color:#222;">支付信息:</div>
<div class="t" style="left:468px;top:459px;color:#222;">@支付信息</div>
<div class="t" style="left:410px;top:483px;color:#222;">公司地址:</div>
<div class="t" style="left:468px;top:483px;color:#222;">@公司地址（经销商）</div>
<div class="t" style="left:410px;top:532px;color:#222;">打印日期:</div>
<div class="t" style="left:470px;top:532px;color:#222;">@打印日期</div>
<div class="t" style="left:1000px;top:501px;color:#222;">@单据编号</div>
<svg style="left:942px;top:489px" width="49" height="37" viewBox="0 0 49 37">
<path d="M1.1 7.6 V1.1 H8 M41 1.1 H47.6 V7.6 M1.1 28.2 V34.7 H8 M41 34.7 H47.6 V28.2" stroke="#2a3140" fill="none" stroke-width="2.2"/>
<g fill="#ff8c1a"><rect x="7.9" y="8.8" width="1.8" height="18.0"/><rect x="11.5" y="8.8" width="1.8" height="14.1"/><rect x="15.1" y="8.8" width="1.8" height="14.1"/><rect x="19.0" y="8.8" width="1.8" height="14.1"/><rect x="22.4" y="8.8" width="1.8" height="18.0"/><rect x="26.1" y="8.8" width="1.8" height="14.1"/><rect x="29.8" y="8.8" width="1.8" height="14.1"/><rect x="33.4" y="8.8" width="1.8" height="14.1"/><rect x="37.1" y="8.8" width="1.8" height="18.0"/></g>
</svg><!--/PAPER-->
<!--TABLE--><div class="a" style="left:348px;top:280px;width:836px;height:20px;background:#f3f6fa;border:1px solid #e2e5ea"></div>
<div class="a" style="left:348px;top:280px;width:61px;height:69px;background:#f3f6fa;border:1px solid #e2e5ea"></div>
<div class="a" style="left:348px;top:320px;width:60px;height:1px;background:#e2e5ea"></div>
<div class="a" style="left:466px;top:281px;width:1px;height:19px;background:#e2e5ea"></div>
<div class="a" style="left:580px;top:281px;width:1px;height:19px;background:#e2e5ea"></div>
<div class="a" style="left:652px;top:281px;width:1px;height:19px;background:#e2e5ea"></div>
<div class="a" style="left:723px;top:281px;width:1px;height:19px;background:#e2e5ea"></div>
<div class="a" style="left:795px;top:281px;width:1px;height:19px;background:#e2e5ea"></div>
<div class="a" style="left:867px;top:281px;width:1px;height:19px;background:#e2e5ea"></div>
<div class="a" style="left:939px;top:281px;width:1px;height:19px;background:#e2e5ea"></div>
<div class="a" style="left:1010px;top:281px;width:1px;height:19px;background:#e2e5ea"></div>
<div class="a" style="left:1093px;top:281px;width:1px;height:19px;background:#e2e5ea"></div>
<div class="th" style="left:408px;top:284px;width:58px;color:#333">A</div>
<div class="th" style="left:466px;top:284px;width:114px;color:#333">B</div>
<div class="th" style="left:580px;top:284px;width:72px;color:#333">C</div>
<div class="th" style="left:652px;top:284px;width:71px;color:#333">D</div>
<div class="th" style="left:723px;top:284px;width:72px;color:#333">E</div>
<div class="th" style="left:795px;top:284px;width:72px;color:#333">F</div>
<div class="th" style="left:867px;top:284px;width:72px;color:#333">G</div>
<div class="th" style="left:939px;top:284px;width:71px;color:#333">H</div>
<div class="th" style="left:1010px;top:284px;width:83px;color:#333">I</div>
<div class="th" style="left:1093px;top:284px;width:90px;color:#333">J</div>
<div class="th" style="left:348px;top:304px;width:60px">标题行</div>
<div class="th" style="left:348px;top:328px;width:60px">数据行</div>
<div class="a" style="left:408px;top:300px;width:775px;height:49px;background:#fff"></div>
<div class="a" style="left:408px;top:299.5px;width:776px;height:1.6px;background:#1f1f1f"></div>
<div class="a" style="left:408px;top:319.8px;width:776px;height:1.4px;background:#1f1f1f"></div>
<div class="a" style="left:407.7px;top:300px;width:1.5px;height:49px;background:#1f1f1f"></div>
<div class="a" style="left:465.7px;top:300px;width:1.5px;height:49px;background:#1f1f1f"></div>
<div class="a" style="left:579.7px;top:300px;width:1.5px;height:49px;background:#1f1f1f"></div>
<div class="a" style="left:651.7px;top:300px;width:1.5px;height:49px;background:#1f1f1f"></div>
<div class="a" style="left:722.7px;top:300px;width:1.5px;height:49px;background:#1f1f1f"></div>
<div class="a" style="left:794.7px;top:300px;width:1.5px;height:49px;background:#1f1f1f"></div>
<div class="a" style="left:866.7px;top:300px;width:1.5px;height:49px;background:#1f1f1f"></div>
<div class="a" style="left:938.7px;top:300px;width:1.5px;height:49px;background:#1f1f1f"></div>
<div class="a" style="left:1009.7px;top:300px;width:1.5px;height:49px;background:#1f1f1f"></div>
<div class="a" style="left:1092.7px;top:300px;width:1.5px;height:49px;background:#1f1f1f"></div>
<div class="a" style="left:1182.7px;top:300px;width:1.5px;height:49px;background:#1f1f1f"></div>
<div class="a" style="left:348px;top:349px;width:61px;height:45.5px;background:#468ef8;border-left:2px solid #1a70f0;border-bottom:2px solid #1a70f0;border-top:1px solid #1a70f0"></div>
<div class="th" style="left:348px;top:365px;width:60px;color:#2a68c9">汇总行</div>
<div class="a" style="left:408px;top:349px;width:776px;height:45px;background:#e7effc"></div>
<div class="a" style="left:407.7px;top:349px;width:1.5px;height:45px;background:#1e6ff0"></div>
<div class="a" style="left:465.7px;top:349px;width:1.5px;height:45px;background:#1e6ff0"></div>
<div class="a" style="left:579.7px;top:349px;width:1.5px;height:45px;background:#1e6ff0"></div>
<div class="a" style="left:651.7px;top:349px;width:1.5px;height:45px;background:#1e6ff0"></div>
<div class="a" style="left:722.7px;top:349px;width:1.5px;height:45px;background:#1e6ff0"></div>
<div class="a" style="left:794.7px;top:349px;width:1.5px;height:45px;background:#1e6ff0"></div>
<div class="a" style="left:866.7px;top:349px;width:1.5px;height:45px;background:#1e6ff0"></div>
<div class="a" style="left:938.7px;top:349px;width:1.5px;height:45px;background:#1e6ff0"></div>
<div class="a" style="left:1009.7px;top:349px;width:1.5px;height:45px;background:#1e6ff0"></div>
<div class="a" style="left:1092.7px;top:349px;width:1.5px;height:45px;background:#1e6ff0"></div>
<div class="a" style="left:1182.7px;top:349px;width:1.5px;height:45px;background:#1e6ff0"></div>
<div class="a" style="left:408px;top:348.6px;width:776.5px;height:1.3px;background:#1e6ff0"></div>
<div class="a" style="left:1183.8px;top:300px;width:1.2px;height:94px;background:#1e6ff0"></div>
<div class="a" style="left:408px;top:392.5px;width:776.5px;height:2px;background:#1e6ff0"></div>
<div class="a" style="left:1182.5px;top:349px;width:2px;height:45px;background:#1e6ff0"></div>
<div class="th" style="left:408px;top:304px;width:58px;text-align:center;color:#1a1a1a;">序号</div>
<div class="th" style="left:466px;top:304px;width:114px;text-align:center;color:#1a1a1a;font-weight:bold;">商品名称</div>
<div class="th" style="left:580px;top:304px;width:72px;text-align:center;color:#1a1a1a;font-weight:bold;">条形码</div>
<div class="th" style="left:652px;top:304px;width:71px;text-align:center;color:#1a1a1a;font-weight:bold;">商品单位</div>
<div class="th" style="left:723px;top:304px;width:72px;text-align:center;color:#1a1a1a;font-weight:bold;">单位换算</div>
<div class="th" style="left:795px;top:304px;width:72px;text-align:center;color:#1a1a1a;font-weight:bold;">订单数量</div>
<div class="th" style="left:867px;top:304px;width:72px;text-align:center;color:#1a1a1a;font-weight:bold;">销售价</div>
<div class="th" style="left:942px;top:304px;width:71px;text-align:left;color:#1a1a1a;">零售价</div>
<div class="th" style="left:1010px;top:304px;width:83px;text-align:center;color:#1a1a1a;font-weight:bold;">订单金额</div>
<div class="th" style="left:1093px;top:304px;width:90px;text-align:center;color:#1a1a1a;font-weight:bold;">备注</div>
<div class="th" style="left:408px;top:328px;width:58px;text-align:center;color:#1a1a1a;">#序号</div>
<div class="th" style="left:469px;top:328px;width:114px;text-align:left;color:#1a1a1a;">#商品名称</div>
<div class="th" style="left:583px;top:328px;width:72px;text-align:left;color:#1a1a1a;">#条形码</div>
<div class="th" style="left:655px;top:328px;width:71px;text-align:left;color:#1a1a1a;">#商品单位</div>
<div class="th" style="left:726px;top:328px;width:72px;text-align:left;color:#1a1a1a;">#单位换算</div>
<div class="th" style="left:798px;top:321px;width:72px;text-align:left;color:#1a1a1a;line-height:13.5px">#订单数量<br>&nbsp;（无单位）</div>
<div class="th" style="left:870px;top:321px;width:72px;text-align:left;color:#1a1a1a;line-height:13.5px">#零售价<br>&nbsp;（小单位）</div>
<div class="th" style="left:942px;top:328px;width:71px;text-align:left;color:#1a1a1a;">#零售价</div>
<div class="th" style="left:1013px;top:328px;width:83px;text-align:left;color:#1a1a1a;">#订单金额</div>
<div class="th" style="left:1096px;top:328px;width:90px;text-align:left;color:#1a1a1a;">#备注</div>
<div class="th" style="left:468px;top:365px;text-align:left;color:#1a1a1a">合计</div>
<div class="th" style="left:798px;top:349px;width:72px;text-align:left;color:#1a1a1a;line-height:15px">订单数量<br>&nbsp;（混合单位<br>合计）:#</div>
<div class="th" style="left:1013px;top:356px;width:82px;text-align:left;color:#1a1a1a;line-height:15px">订单金额（合<br>计）:#</div>
<div class="a" style="left:387px;top:365px;width:92px;height:104px;background:#fff;border-radius:8px;box-shadow:0 3px 14px rgba(0,0,0,.16)"></div>
<div class="t" style="left:403px;top:379px;color:#333">上方插入行</div>
<div class="t" style="left:403px;top:411px;color:#333">下方插入行</div>
<div class="t" style="left:403px;top:443px;color:#333">删除行</div>
<svg style="left:0;top:0" width="1506" height="804" viewBox="0 0 1506 804"><path d="M324.5 531.5 L388 394" stroke="#e8442e" stroke-width="4" stroke-linecap="round"/><path d="M391.5 389.5 L377.5 401 L391.5 407.5 Z" fill="#e8442e" stroke="#e8442e" stroke-width="1.5" stroke-linejoin="round"/></svg><!--/TABLE-->
<!-- RIGHT PANEL -->
<!--RIGHT--><div class="a" style="left:1319px;top:67px;width:187px;height:737px;background:#fff"></div>
<div class="a" style="left:1317px;top:117px;width:1px;height:687px;background:#e8e8e8"></div>
<div class="tab" style="left:1318px;width:81px;color:#1e6ff0;background:#fff;border-color:#f1f1f1">控件属性</div>
<div class="tab" style="left:1402px;width:82px;background:#fafafa">打印设置</div>
<div class="a" style="left:1399px;top:116px;width:107px;height:1px;background:#ececec"></div>
<div class="sec" style="left:1334px;top:131px">表格属性</div>
<div class="cb on" style="left:1334px;top:172px"></div>
<svg style="left:1334px;top:172px" width="16" height="16" viewBox="0 0 16 16"><path d="M3.8 8.2 L6.8 11 L12.2 5.2" stroke="#fff" stroke-width="1.9" fill="none" stroke-linecap="round" stroke-linejoin="round"/></svg>
<div class="rp" style="left:1358px;top:173px">行高自适应</div>
<div class="cb on" style="left:1334px;top:204px"></div>
<svg style="left:1334px;top:204px" width="16" height="16" viewBox="0 0 16 16"><path d="M3.8 8.2 L6.8 11 L12.2 5.2" stroke="#fff" stroke-width="1.9" fill="none" stroke-linecap="round" stroke-linejoin="round"/></svg>
<div class="rp" style="left:1358px;top:205px">每页打印表头</div>
<div class="cb on" style="left:1334px;top:236px"></div>
<svg style="left:1334px;top:236px" width="16" height="16" viewBox="0 0 16 16"><path d="M3.8 8.2 L6.8 11 L12.2 5.2" stroke="#fff" stroke-width="1.9" fill="none" stroke-linecap="round" stroke-linejoin="round"/></svg>
<div class="rp" style="left:1358px;top:237px">每页打印表尾</div>
<div class="cb on" style="left:1334px;top:268px"></div>
<svg style="left:1334px;top:268px" width="16" height="16" viewBox="0 0 16 16"><path d="M3.8 8.2 L6.8 11 L12.2 5.2" stroke="#fff" stroke-width="1.9" fill="none" stroke-linecap="round" stroke-linejoin="round"/></svg>
<div class="rp" style="left:1358px;top:269px">每页固定打印</div>
<div class="cb off" style="left:1334px;top:300px"></div>
<div class="rp" style="left:1358px;top:301px">页尾补空行</div>
<div class="cb on" style="left:1334px;top:332px"></div>
<svg style="left:1334px;top:332px" width="16" height="16" viewBox="0 0 16 16"><path d="M3.8 8.2 L6.8 11 L12.2 5.2" stroke="#fff" stroke-width="1.9" fill="none" stroke-linecap="round" stroke-linejoin="round"/></svg>
<div class="rp" style="left:1358px;top:333px">每页打印小计</div>
<div class="cb off" style="left:1334px;top:364px"></div>
<div class="rp" style="left:1358px;top:365px">即打即停</div>
<div class="inp" style="left:1450px;top:260px;width:80px;height:32px;border-radius:5px"></div>
<div class="rp" style="left:1461px;top:269px;color:#222">4</div>
<div class="inp" style="left:1450px;top:356px;width:80px;height:32px;border-radius:5px;background:#f5f5f5"></div>
<div class="rp" style="left:1462px;top:365px;color:#bbb">留白</div>
<div class="rp" style="left:1499px;top:365px;color:#bbb">m</div>
<div class="sec" style="left:1334px;top:406px">边框</div>
<div class="lbl" style="left:1334px;top:444px">边框样式</div>
<div class="inp" style="left:1334px;top:463px;width:77px;height:31px;border-radius:5px"></div>
<div class="rp" style="left:1346px;top:472px">实线</div>
<svg style="left:1388px;top:476px" width="9" height="6" viewBox="0 0 9 6"><path d="M.5 .8 4.5 5 8.5 .8" stroke="#bbb" fill="none" stroke-width="1"/></svg>
<div class="inp" style="left:1421px;top:463px;width:59px;height:31px;border-radius:5px"></div>
<div class="rp" style="left:1433px;top:472px">1</div>
<div class="rp" style="left:1455px;top:472px">px</div>
<div class="inp" style="left:1490px;top:463px;width:40px;height:31px;border-radius:5px"></div>
<div class="a" style="left:1494px;top:467px;width:20px;height:23px;background:#000;border-radius:3px"></div>
<div class="sec" style="left:1334px;top:522px">单元格</div>
<div class="lbl" style="left:1334px;top:559px">内容</div>
<div class="inp" style="left:1334px;top:577px;width:200px;height:32px;border-radius:5px;background:#f5f5f5"></div>
<div class="rp" style="left:1346px;top:586px;color:#bbb">请输入单元格内容</div>
<div class="lbl" style="left:1334px;top:623px">内容超长时</div>
<div class="inp" style="left:1334px;top:641px;width:200px;height:32px;border-radius:5px"></div>
<div class="rp" style="left:1346px;top:650px">换行</div>
<div class="lbl" style="left:1334px;top:687px">内边框</div>
<div class="cb on" style="left:1334px;top:707px"></div>
<svg style="left:1334px;top:707px" width="16" height="16" viewBox="0 0 16 16"><path d="M3.8 8.2 L6.8 11 L12.2 5.2" stroke="#fff" stroke-width="1.9" fill="none" stroke-linecap="round" stroke-linejoin="round"/></svg>
<div class="rp" style="left:1358px;top:708px">上边框</div>
<div class="cb on" style="left:1433px;top:707px"></div>
<svg style="left:1433px;top:707px" width="16" height="16" viewBox="0 0 16 16"><path d="M3.8 8.2 L6.8 11 L12.2 5.2" stroke="#fff" stroke-width="1.9" fill="none" stroke-linecap="round" stroke-linejoin="round"/></svg>
<div class="rp" style="left:1457px;top:708px">下边框</div>
<div class="cb on" style="left:1334px;top:737px"></div>
<svg style="left:1334px;top:737px" width="16" height="16" viewBox="0 0 16 16"><path d="M3.8 8.2 L6.8 11 L12.2 5.2" stroke="#fff" stroke-width="1.9" fill="none" stroke-linecap="round" stroke-linejoin="round"/></svg>
<div class="rp" style="left:1358px;top:738px">左边框</div>
<div class="cb on" style="left:1433px;top:737px"></div>
<svg style="left:1433px;top:737px" width="16" height="16" viewBox="0 0 16 16"><path d="M3.8 8.2 L6.8 11 L12.2 5.2" stroke="#fff" stroke-width="1.9" fill="none" stroke-linecap="round" stroke-linejoin="round"/></svg>
<div class="rp" style="left:1457px;top:738px">右边框</div>
<div class="sec" style="left:1334px;top:782px">行属性</div><!--/RIGHT-->

</body></html>
